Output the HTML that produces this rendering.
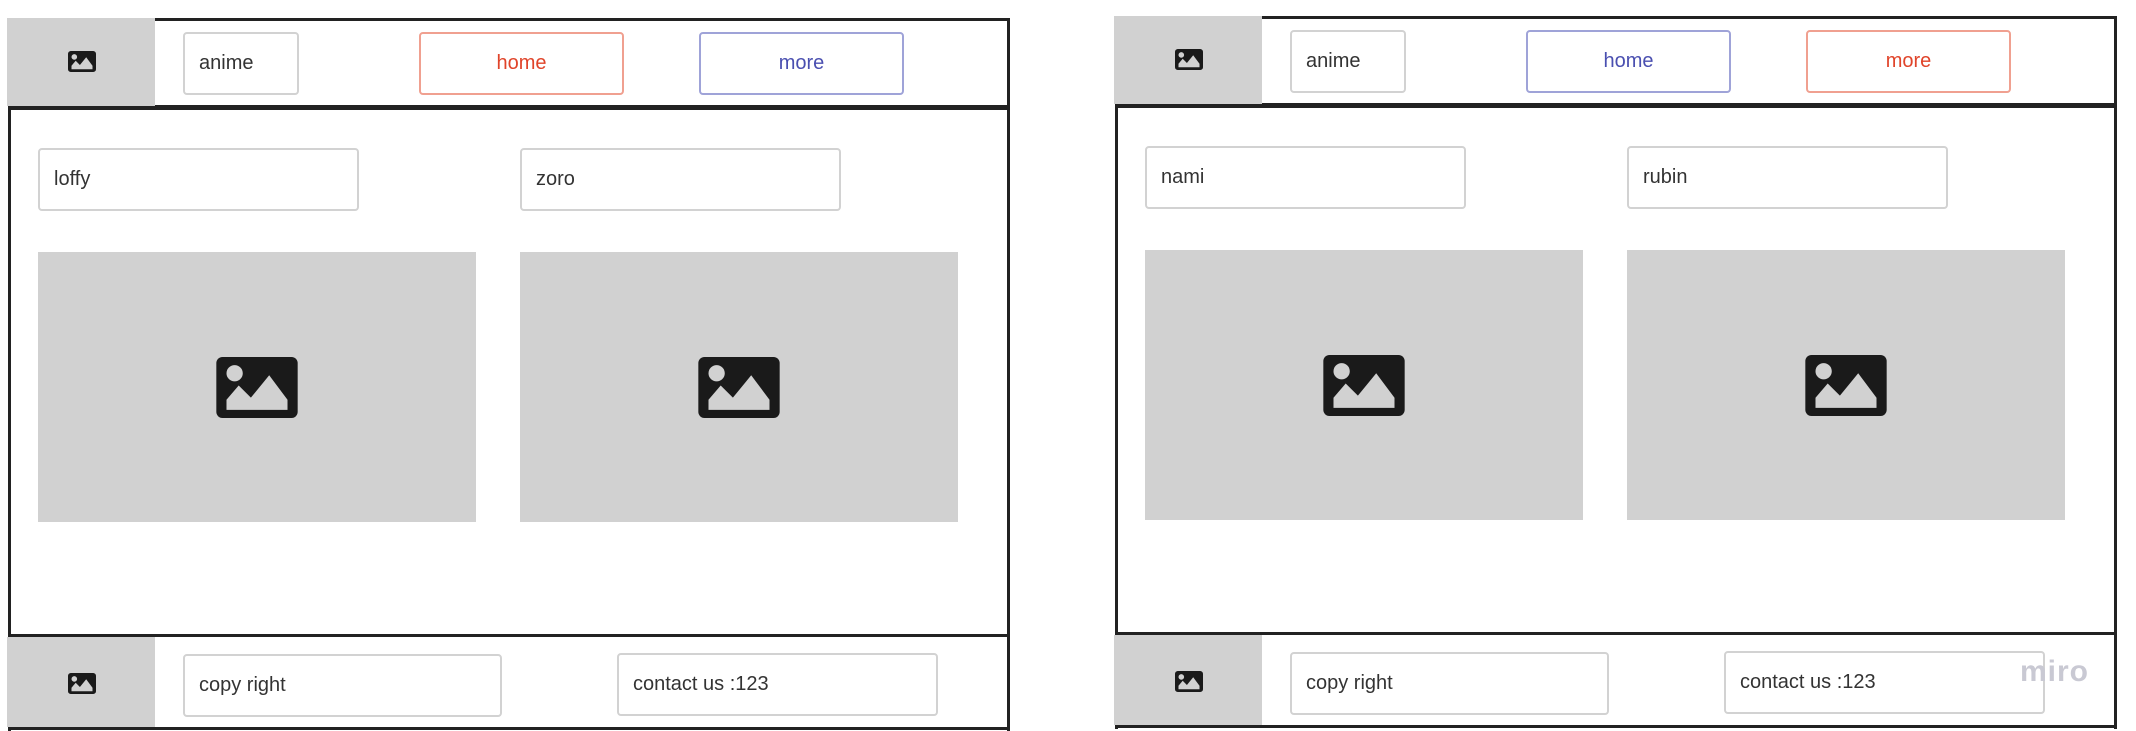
<!DOCTYPE html>
<html><head><meta charset="utf-8"><style>
*{margin:0;padding:0;box-sizing:border-box}
body{width:2136px;height:731px;background:#fff;position:relative;overflow:hidden;font-family:"Liberation Sans",Arial,sans-serif}
.a{position:absolute}
.fr{position:absolute;left:0;top:0;width:1020px;height:731px}
.line{position:absolute;background:#222}
.gray{position:absolute;background:#d1d1d1}
.box{position:absolute;border:2px solid #d2d2d2;border-radius:4px;background:#fff;font-size:20px;color:#333;display:flex;align-items:center;padding-left:14px}
.btn{position:absolute;border:2px solid;border-radius:4px;background:#fff;font-size:20px;display:flex;align-items:center;justify-content:center}
.red{border-color:#f0a090;color:#e0442a}
.blue{border-color:#9fa3d8;color:#4a4fb0}
svg{position:absolute}
</style></head><body>

<!-- LEFT FRAME -->
<div class="fr" style="left:0;top:0">
  <div class="line" style="left:8px;top:18px;width:1002px;height:3px"></div>
  <div class="line" style="left:1007px;top:18px;width:3px;height:713px"></div>
  <div class="line" style="left:8px;top:18px;width:3px;height:713px"></div>
  <div class="line" style="left:8px;top:105px;width:1002px;height:5px"></div>
  <div class="line" style="left:8px;top:634px;width:1002px;height:3px"></div>
  <div class="line" style="left:8px;top:727px;width:1002px;height:3px"></div>
  <div class="gray" style="left:7px;top:18px;width:148px;height:88px"></div>
  <div class="gray" style="left:7px;top:637px;width:148px;height:90px"></div>
  <svg style="left:68px;top:51px" width="28" height="21" viewBox="0 0 40 30"><rect width="40" height="30" rx="4" fill="#1a1a1a"/><circle cx="9" cy="8.5" r="4" fill="#d1d1d1"/><polygon points="5,26 5,21 11,14 17,20 26,9 35,21 35,26" fill="#d1d1d1"/></svg>
  <svg style="left:68px;top:673px" width="28" height="21" viewBox="0 0 40 30"><rect width="40" height="30" rx="4" fill="#1a1a1a"/><circle cx="9" cy="8.5" r="4" fill="#d1d1d1"/><polygon points="5,26 5,21 11,14 17,20 26,9 35,21 35,26" fill="#d1d1d1"/></svg>
  <div class="box" style="left:183px;top:32px;width:116px;height:63px">anime</div>
  <div class="btn red" style="left:419px;top:32px;width:205px;height:63px">home</div>
  <div class="btn blue" style="left:699px;top:32px;width:205px;height:63px">more</div>
  <div class="box" style="left:38px;top:148px;width:321px;height:63px">loffy</div>
  <div class="box" style="left:520px;top:148px;width:321px;height:63px">zoro</div>
  <div class="gray" style="left:38px;top:252px;width:438px;height:270px"></div>
  <div class="gray" style="left:520px;top:252px;width:438px;height:270px"></div>
  <svg style="left:216px;top:357px" width="82" height="61" viewBox="0 0 40 30"><rect width="40" height="30" rx="3" fill="#1a1a1a"/><circle cx="9" cy="8" r="4" fill="#d1d1d1"/><polygon points="5,26 5,21 11,14 17,20 26,9 35,21 35,26" fill="#d1d1d1"/></svg>
  <svg style="left:698px;top:357px" width="82" height="61" viewBox="0 0 40 30"><rect width="40" height="30" rx="3" fill="#1a1a1a"/><circle cx="9" cy="8" r="4" fill="#d1d1d1"/><polygon points="5,26 5,21 11,14 17,20 26,9 35,21 35,26" fill="#d1d1d1"/></svg>
  <div class="box" style="left:183px;top:654px;width:319px;height:63px">copy right</div>
  <div class="box" style="left:617px;top:653px;width:321px;height:63px">contact us :123</div>
</div>

<!-- RIGHT FRAME -->
<div class="fr" style="left:1107px;top:-2px">
  <div class="line" style="left:8px;top:18px;width:1002px;height:3px"></div>
  <div class="line" style="left:1007px;top:18px;width:3px;height:713px"></div>
  <div class="line" style="left:8px;top:18px;width:3px;height:713px"></div>
  <div class="line" style="left:8px;top:105px;width:1002px;height:5px"></div>
  <div class="line" style="left:8px;top:634px;width:1002px;height:3px"></div>
  <div class="line" style="left:8px;top:727px;width:1002px;height:3px"></div>
  <div class="gray" style="left:7px;top:18px;width:148px;height:88px"></div>
  <div class="gray" style="left:7px;top:637px;width:148px;height:90px"></div>
  <svg style="left:68px;top:51px" width="28" height="21" viewBox="0 0 40 30"><rect width="40" height="30" rx="4" fill="#1a1a1a"/><circle cx="9" cy="8.5" r="4" fill="#d1d1d1"/><polygon points="5,26 5,21 11,14 17,20 26,9 35,21 35,26" fill="#d1d1d1"/></svg>
  <svg style="left:68px;top:673px" width="28" height="21" viewBox="0 0 40 30"><rect width="40" height="30" rx="4" fill="#1a1a1a"/><circle cx="9" cy="8.5" r="4" fill="#d1d1d1"/><polygon points="5,26 5,21 11,14 17,20 26,9 35,21 35,26" fill="#d1d1d1"/></svg>
  <div class="box" style="left:183px;top:32px;width:116px;height:63px">anime</div>
  <div class="btn blue" style="left:419px;top:32px;width:205px;height:63px">home</div>
  <div class="btn red" style="left:699px;top:32px;width:205px;height:63px">more</div>
  <div class="box" style="left:38px;top:148px;width:321px;height:63px">nami</div>
  <div class="box" style="left:520px;top:148px;width:321px;height:63px">rubin</div>
  <div class="gray" style="left:38px;top:252px;width:438px;height:270px"></div>
  <div class="gray" style="left:520px;top:252px;width:438px;height:270px"></div>
  <svg style="left:216px;top:357px" width="82" height="61" viewBox="0 0 40 30"><rect width="40" height="30" rx="3" fill="#1a1a1a"/><circle cx="9" cy="8" r="4" fill="#d1d1d1"/><polygon points="5,26 5,21 11,14 17,20 26,9 35,21 35,26" fill="#d1d1d1"/></svg>
  <svg style="left:698px;top:357px" width="82" height="61" viewBox="0 0 40 30"><rect width="40" height="30" rx="3" fill="#1a1a1a"/><circle cx="9" cy="8" r="4" fill="#d1d1d1"/><polygon points="5,26 5,21 11,14 17,20 26,9 35,21 35,26" fill="#d1d1d1"/></svg>
  <div class="box" style="left:183px;top:654px;width:319px;height:63px">copy right</div>
  <div class="box" style="left:617px;top:653px;width:321px;height:63px">contact us :123</div>
</div>

<div class="a" style="left:2020px;top:655px;font-size:30px;font-weight:bold;color:#c9c9d3;letter-spacing:1px">miro</div>
</body></html>
